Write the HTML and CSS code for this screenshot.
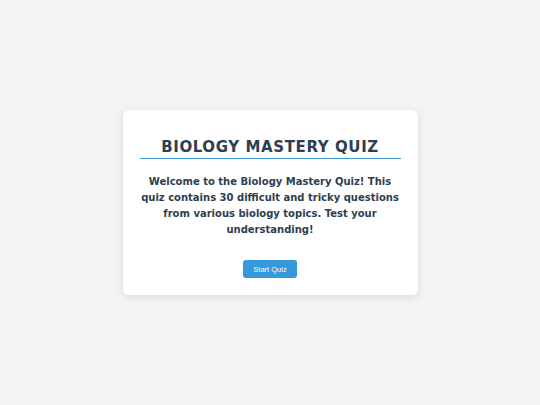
FILE: index.html
```
<!DOCTYPE html>
<html lang="en">
<head>
    <meta charset="UTF-8">
    <meta name="viewport" content="width=device-width, initial-scale=1.0">
    <title>Biology Mastery Quiz</title>
    <link rel="stylesheet" href="styles.css">
</head>
<body>
    <!-- quiz start screen -->
    <div class="quiz-card">
        <h1 class="quiz-title">BIOLOGY MASTERY QUIZ</h1>
        <p class="quiz-intro">Welcome to the Biology Mastery Quiz! This quiz contains 30 difficult and tricky questions from various biology topics. Test your understanding!</p>
        <button class="btn" id="start-btn">Start Quiz</button>
    </div>
</body>
</html>
```

FILE: styles.css
```
html, body { height: 100%; }
body {
    margin: 0;
    display: flex;
    align-items: center;
    justify-content: center;
    background: #f3f4f4;
    font-family: "DejaVu Sans", Verdana, sans-serif;
    color: #2c3e50;
}
.quiz-card {
    box-sizing: border-box;
    width: 295px;
    padding: 28px 17px 17px;
    background: #fff;
    border-radius: 6px;
    box-shadow: 0 2px 8px rgba(0, 0, 0, 0.12);
    text-align: center;
}
.quiz-title {
    margin: 0 0 15px;
    padding-bottom: 2px;
    font-size: 15px;
    line-height: 18px;
    letter-spacing: 0.6px;
    border-bottom: 1px solid #3d9bd8;
}
.quiz-intro {
    margin: 0 0 22px;
    font-size: 10px;
    font-weight: bold;
    line-height: 16px;
}
.btn {
    display: block;
    margin: 0 auto;
    width: 54px;
    height: 18px;
    padding: 0;
    color: #fff;
    background-color: #3498db;
    border: none;
    border-radius: 3px;
    font-family: "Liberation Sans", Arial, sans-serif;
    font-size: 7.5px;
    cursor: pointer;
}
```
